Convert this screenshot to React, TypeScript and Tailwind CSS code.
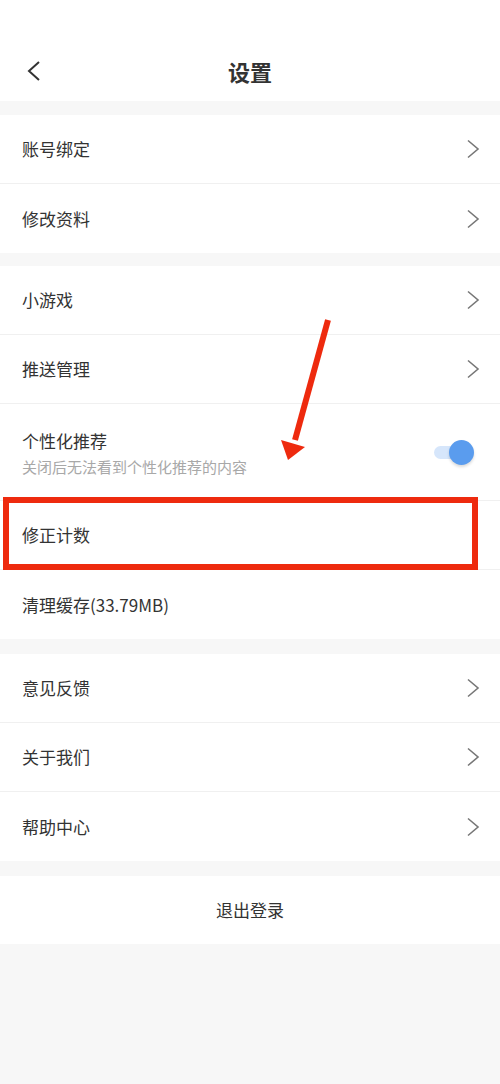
import { type ReactNode } from 'react'

const FONT = { fontFamily: '"Noto Sans CJK SC", "Noto Sans", sans-serif' }

function Chevron() {
  return (
    <svg width="14" height="20" viewBox="0 0 14 20" fill="none" className="shrink-0">
      <path d="M2 1.5L12 10L2 18.5" stroke="#777" strokeWidth="1.6" strokeLinejoin="miter" />
    </svg>
  )
}

function Row({ label, arrow = true, last = false }: { label: string; arrow?: boolean; last?: boolean }) {
  return (
    <div
      className={`flex h-[69px] items-center justify-between pl-[22px] pr-[20px] ${
        last ? '' : 'border-b border-[#f0f0f0]'
      }`}
    >
      <span className="text-[17px] text-[#333]">{label}</span>
      {arrow ? <Chevron /> : null}
    </div>
  )
}

function Group({ children }: { children: ReactNode }) {
  return <div className="bg-white">{children}</div>
}

export default function App() {
  return (
    <div className="relative min-h-[1084px] w-[500px] bg-[#f7f7f7]" style={FONT}>
      {/* header */}
      <div className="flex h-[101px] items-end bg-white pb-[15px]">
        <div className="relative flex h-[30px] w-full items-center justify-center">
          <svg width="16" height="22" viewBox="0 0 16 22" fill="none" className="absolute left-[25px]">
            <path d="M14 2L4 11L14 20" stroke="#333" strokeWidth="2" />
          </svg>
          <span className="text-[22px] font-bold text-[#333]">设置</span>
        </div>
      </div>

      <div className="h-[14px]" />
      <Group>
        <Row label="账号绑定" />
        <Row label="修改资料" last />
      </Group>

      <div className="h-[13px]" />
      <Group>
        <Row label="小游戏" />
        <Row label="推送管理" />
        <div className="flex h-[97px] items-center justify-between border-b border-[#f0f0f0] pl-[22px] pr-[26px]">
          <div className="flex flex-col gap-[6px] pt-[2px]">
            <span className="text-[17px] leading-[22px] text-[#333]">个性化推荐</span>
            <span className="text-[15px] leading-[18px] text-[#a8a8a8]">关闭后无法看到个性化推荐的内容</span>
          </div>
          <div className="relative h-[25px] w-[40px]">
            <div className="absolute left-0 top-[6px] h-[13px] w-[32px] rounded-full bg-[#d6e6fb]" />
            <div className="absolute right-0 top-0 h-[25px] w-[25px] rounded-full bg-[#5a9cee] shadow-[0_2px_3px_rgba(0,0,0,0.15)]" />
          </div>
        </div>
        <Row label="修正计数" arrow={false} />
        <Row label="清理缓存(33.79MB)" arrow={false} last />
      </Group>

      <div className="h-[15px]" />
      <Group>
        <Row label="意见反馈" />
        <Row label="关于我们" />
        <Row label="帮助中心" last />
      </Group>

      <div className="h-[15px]" />
      <div className="flex h-[68px] items-center justify-center bg-white">
        <span className="text-[17px] text-[#333]">退出登录</span>
      </div>

      {/* annotation overlays */}
      <div className="pointer-events-none absolute left-[3px] top-[497px] h-[73px] w-[475px] border-[6px] border-[#ee2a0e]" />
      <svg
        className="pointer-events-none absolute left-0 top-0"
        width="500"
        height="600"
        viewBox="0 0 500 600"
        fill="none"
      >
        <path d="M328 320L295 440" stroke="#ee2a0e" strokeWidth="6" />
        <path d="M281 440L305 447L288 460Z" fill="#ee2a0e" />
      </svg>
    </div>
  )
}
